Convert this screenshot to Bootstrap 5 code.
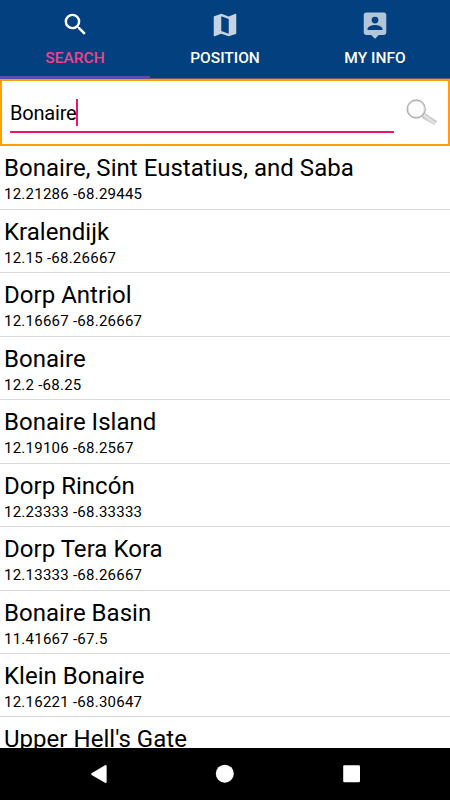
<!DOCTYPE html>
<html lang="en">
<head>
<meta charset="utf-8">
<meta name="viewport" content="width=device-width, initial-scale=1">
<title>Search</title>
<link href="https://cdn.jsdelivr.net/npm/bootstrap@5.3.0/dist/css/bootstrap.min.css" rel="stylesheet">
<style>
body{font-family:Roboto,sans-serif;color:#000;background:#fff}
.app{height:800px;width:450px}
.tabs{height:79px;background:#03407f}
.tabs .nav-link{height:79px;padding:9.5px 0 0;color:#fff;font-size:15.5px;font-weight:500;line-height:20px;border-radius:0;border-bottom:1px solid #76566c}
.tabs .nav-link.active{color:#f5418b;border-bottom:3px solid #5a4db0}
.tabs svg{display:block;margin:0 auto 8px}
.tabs .nav-link.active svg{margin-bottom:9px}
.searchbar{height:67px;border:2px solid #fd9f05;padding:0 11px 0 8px}
.field{width:384px;height:52px;border-bottom:2px solid #f4116d;font-size:20px;letter-spacing:-.2px;padding-top:13px}
.caret{width:2px;height:27px;background:#f4116d}
.lens{margin-top:16px}
.results{overflow:hidden}
.place{height:63.45px;padding:7px 4px 0;border-bottom:1px solid #d9d9d9}
.place:first-child{height:63.95px}
.place-name{font-size:24px;line-height:30px;letter-spacing:.03px}
.place-pos{font-size:15px;line-height:18px;margin-top:2px;letter-spacing:.25px}
.sysbar{height:52px}
</style>
<script src="https://cdn.jsdelivr.net/npm/bootstrap@5.3.0/dist/js/bootstrap.bundle.min.js"></script>
</head>
<body>
<div class="app d-flex flex-column overflow-hidden">
<nav class="tabs nav nav-fill flex-shrink-0">
<a class="nav-link active col-4"><svg width="29" height="29" viewBox="0 0 24 24" fill="#fff"><path d="M15.5 14h-.79l-.28-.27A6.47 6.47 0 0 0 16 9.5 6.5 6.5 0 1 0 9.5 16c1.61 0 3.09-.59 4.23-1.57l.27.28v.79l5 4.99L20.49 19l-4.99-5zm-6 0a4.5 4.5 0 1 1 0-9 4.5 4.5 0 0 1 0 9z"/></svg>SEARCH</a>
<a class="nav-link col-4"><svg width="30" height="30" viewBox="0 0 24 24" fill="#c5d3e2"><path d="M20.5 3l-.16.03L15 5.1 9 3 3.36 4.9c-.21.07-.36.25-.36.48V20.5c0 .28.22.5.5.5l.16-.03L9 18.9l6 2.1 5.64-1.9c.21-.07.36-.25.36-.48V3.5c0-.28-.22-.5-.5-.5zM15 19l-6-2.11V5l6 2.11V19z"/></svg>POSITION</a>
<a class="nav-link col-4"><svg width="30" height="30" viewBox="0 0 24 24" fill="#b3c6d9"><path d="M19 2H5a2 2 0 0 0-2 2v14c0 1.1.9 2 2 2h4l3 3 3-3h4c1.1 0 2-.9 2-2V4a2 2 0 0 0-2-2zm-7 3.3a2.7 2.7 0 1 1 0 5.4 2.7 2.7 0 0 1 0-5.4zM18 16H6v-.9c0-2 4-3.1 6-3.1s6 1.1 6 3.1v.9z"/></svg>MY INFO</a>
</nav>
<div class="searchbar d-flex align-items-start justify-content-between flex-shrink-0">
<div class="field d-flex align-items-center"><span>Bonaire</span><span class="caret"></span></div>
<svg class="lens" width="32" height="30" viewBox="0 0 32 30"><defs><linearGradient id="handle" x1="0" y1="1" x2="1" y2="0"><stop offset=".25" stop-color="#aaa"/><stop offset=".5" stop-color="#e6e6e6"/><stop offset=".8" stop-color="#999"/></linearGradient></defs><path d="M16.8 19.5L20.3 16.3 32 24.2 29.6 28.3 17.5 21.3z" fill="url(#handle)"/><circle cx="11.2" cy="12" r="9" fill="#fcfcfc" stroke="#aaa" stroke-width="1.3"/><circle cx="11.2" cy="12" r="8" fill="none" stroke="#d5d5d5" stroke-width=".8"/></svg>
</div>
<main class="results flex-grow-1">
<div class="place"><div class="place-name">Bonaire, Sint Eustatius, and Saba</div><div class="place-pos">12.21286 -68.29445</div></div>
<div class="place"><div class="place-name">Kralendijk</div><div class="place-pos">12.15 -68.26667</div></div>
<div class="place"><div class="place-name">Dorp Antriol</div><div class="place-pos">12.16667 -68.26667</div></div>
<div class="place"><div class="place-name">Bonaire</div><div class="place-pos">12.2 -68.25</div></div>
<div class="place"><div class="place-name">Bonaire Island</div><div class="place-pos">12.19106 -68.2567</div></div>
<div class="place"><div class="place-name">Dorp Rincón</div><div class="place-pos">12.23333 -68.33333</div></div>
<div class="place"><div class="place-name">Dorp Tera Kora</div><div class="place-pos">12.13333 -68.26667</div></div>
<div class="place"><div class="place-name">Bonaire Basin</div><div class="place-pos">11.41667 -67.5</div></div>
<div class="place"><div class="place-name">Klein Bonaire</div><div class="place-pos">12.16221 -68.30647</div></div>
<div class="place"><div class="place-name">Upper Hell's Gate</div></div>
</main>
<footer class="sysbar bg-black flex-shrink-0">
<svg class="d-block" width="450" height="52" viewBox="0 0 450 52" fill="#fff"><path d="M105 17.2Q106.600 16.4 106.600 18V34Q106.600 35.4 105 34.7L91.6 27Q90.6 26 91.6 25.2z"/><circle cx="224.8" cy="25.7" r="9"/><rect x="343.2" y="17.2" width="16.8" height="17" rx="1.2"/></svg>
</footer>
</div>
</body>
</html>
